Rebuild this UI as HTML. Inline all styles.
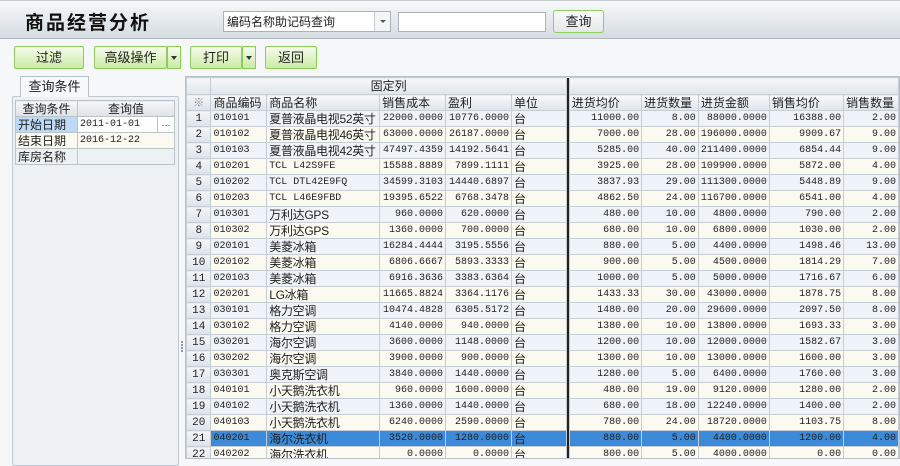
<!DOCTYPE html>
<html><head><meta charset="utf-8"><style>
*{margin:0;padding:0;box-sizing:border-box}
body{width:900px;height:459px;overflow:hidden;background:#f5f7f9;font-family:"Liberation Sans","Noto Sans CJK SC",sans-serif;font-size:12px;color:#222;position:relative}
.top{position:absolute;left:0;top:0;width:900px;height:39px;background:linear-gradient(#f7f8f9,#d4dce1);border-top:1px solid #c8ccd0;border-bottom:1px solid #b0b8bf}
.title{position:absolute;left:25px;top:7px;font-size:19px;font-weight:bold;letter-spacing:2px;color:#111}
.combo{position:absolute;left:223px;top:10px;width:168px;height:21px;background:#fff;border:1px solid #a9b2ba;font-size:12px;padding:1px 3px}
.combo .ar{position:absolute;right:0;top:0;width:16px;height:19px;border-left:1px solid #ccc;background:#f4f5f6}
.combo .ar:after{content:"";position:absolute;left:5px;top:8px;border:3px solid transparent;border-top:3px solid #555}
.inp{position:absolute;left:398px;top:11px;width:148px;height:20px;background:#fff;border:1px solid #a9b2ba}
.btn{position:absolute;height:23px;border:1px solid #8ccd57;border-radius:2px;background:linear-gradient(#f6fbec,#cbeba5);text-align:center;line-height:21px;font-size:13px;color:#222}
.qb{background:linear-gradient(#fafafa,#e4e8ea);border:1px solid #8fd060;border-radius:3px}
.dd{position:absolute;height:23px;width:14px;border:1px solid #8ccd57;background:linear-gradient(#f6fbec,#cbeba5)}
.dd:after{content:"";position:absolute;left:3px;top:9px;border:3px solid transparent;border-top:4px solid #333}
.tab{position:absolute;left:20px;top:76px;width:69px;height:21px;background:#f7f8f9;border:1px solid #b8c0c6;border-bottom:none;text-align:center;line-height:20px;font-size:13px}
.panel{position:absolute;left:12px;top:96px;width:167px;height:370px;background:#eef1f4;border:1px solid #c2c9ce;border-radius:2px}
.lt{position:absolute;left:15px;top:100px;width:159px;border-collapse:collapse;table-layout:fixed;font-size:12px}
.lt td{border:1px solid #bcc4ca;height:16px;padding:0 2px;white-space:nowrap;overflow:hidden;line-height:14px}
.lt .h td{background:linear-gradient(#f6f7f8,#dde3e7);text-align:center}
.dots{position:absolute;left:181px;top:341px;width:2px;height:12px;background:repeating-linear-gradient(#8a9aa8 0 2px,transparent 2px 3px)}
.grid{position:absolute;left:185px;top:76px;width:715px;height:383px;background:#fff;border:1px solid #b8c0c6;overflow:hidden}
.gt{border-collapse:collapse;table-layout:fixed;font-family:"Liberation Mono","Noto Sans CJK SC",monospace;font-size:10px}
.gt td{border:1px solid #c6cdd3;height:16px;padding:0 2px;white-space:nowrap;overflow:hidden;line-height:14px}
.gt .hd td{background:linear-gradient(#f7f8f9,#dfe5e9);font-family:"Liberation Sans","Noto Sans CJK SC",sans-serif;font-size:12px;text-align:left}
.gt td.n{text-align:center;font-size:11px}
.gt td.r{text-align:right}
.gt td.c{font-family:"Liberation Sans","Noto Sans CJK SC",sans-serif;font-size:12px;letter-spacing:-0.3px}
.gt tr.o td{background:#eff3f8}
.gt tr.e td{background:#fbfaf0}
.gt tr.s td{background:#3d8bd8}
.gt tr td.n{background:linear-gradient(#f4f6f8,#dce3e8)}
.gt tr td.sep{background:#222;border:none;padding:0}
</style></head><body>
<div class="top">
<div class="title">商品经营分析</div>
<div class="combo">编码名称助记码查询<div class="ar"></div></div>
<div class="inp"></div>
<div class="btn qb" style="left:553px;top:9px;width:51px;height:23px">查询</div>
</div>
<div class="btn" style="left:14px;top:46px;width:70px">过滤</div>
<div class="btn" style="left:94px;top:46px;width:73px">高级操作</div>
<div class="dd" style="left:167px;top:46px"></div>
<div class="btn" style="left:190px;top:46px;width:52px">打印</div>
<div class="dd" style="left:242px;top:46px"></div>
<div class="btn" style="left:265px;top:46px;width:52px">返回</div>
<div class="panel"></div>
<div class="tab">查询条件</div>
<table class="lt">
<colgroup><col style="width:62px"><col style="width:80px"><col style="width:17px"></colgroup>
<tr class="h"><td>查询条件</td><td colspan="2">查询值</td></tr>
<tr><td style="background:#bcd9f6">开始日期</td><td style="background:#fff;font-family:'Liberation Mono',monospace;font-size:10px">2011-01-01</td><td style="background:#fff;font-size:9px;text-align:center;padding:0">···</td></tr>
<tr><td style="background:#fbfaf0">结束日期</td><td colspan="2" style="background:#fbfaf0;font-family:'Liberation Mono',monospace;font-size:10px">2016-12-22</td></tr>
<tr><td style="background:#eef1f4">库房名称</td><td colspan="2" style="background:#eef1f4"></td></tr>
</table>
<div class="dots"></div>
<div class="grid">
<table class="gt">
<colgroup><col style="width:25px"><col style="width:56px"><col style="width:113px"><col style="width:66px"><col style="width:66px"><col style="width:57px"><col style="width:3px"><col style="width:74px"><col style="width:57px"><col style="width:64px"><col style="width:76px"><col style="width:55px"></colgroup>
<tr class="hd" style="height:17px"><td class="n" style="background:linear-gradient(#f7f8f9,#dfe5e9)"></td><td colspan="5" style="text-align:center">固定列</td><td class="sep"></td><td colspan="5"></td></tr>
<tr class="hd"><td class="n" style="color:#888">※</td><td>商品编码</td><td>商品名称</td><td>销售成本</td><td>盈利</td><td>单位</td><td class="sep"></td><td>进货均价</td><td>进货数量</td><td>进货金额</td><td>销售均价</td><td>销售数量</td></tr>
<tr class="o"><td class="n">1</td><td>010101</td><td class="c">夏普液晶电视52英寸</td><td class="r">22000.0000</td><td class="r">10776.0000</td><td class="c">台</td><td class="sep"></td><td class="r">11000.00</td><td class="r">8.00</td><td class="r">88000.0000</td><td class="r">16388.00</td><td class="r">2.00</td></tr>
<tr class="e"><td class="n">2</td><td>010102</td><td class="c">夏普液晶电视46英寸</td><td class="r">63000.0000</td><td class="r">26187.0000</td><td class="c">台</td><td class="sep"></td><td class="r">7000.00</td><td class="r">28.00</td><td class="r">196000.0000</td><td class="r">9909.67</td><td class="r">9.00</td></tr>
<tr class="o"><td class="n">3</td><td>010103</td><td class="c">夏普液晶电视42英寸</td><td class="r">47497.4359</td><td class="r">14192.5641</td><td class="c">台</td><td class="sep"></td><td class="r">5285.00</td><td class="r">40.00</td><td class="r">211400.0000</td><td class="r">6854.44</td><td class="r">9.00</td></tr>
<tr class="e"><td class="n">4</td><td>010201</td><td>TCL L42S9FE</td><td class="r">15588.8889</td><td class="r">7899.1111</td><td class="c">台</td><td class="sep"></td><td class="r">3925.00</td><td class="r">28.00</td><td class="r">109900.0000</td><td class="r">5872.00</td><td class="r">4.00</td></tr>
<tr class="o"><td class="n">5</td><td>010202</td><td>TCL DTL42E9FQ</td><td class="r">34599.3103</td><td class="r">14440.6897</td><td class="c">台</td><td class="sep"></td><td class="r">3837.93</td><td class="r">29.00</td><td class="r">111300.0000</td><td class="r">5448.89</td><td class="r">9.00</td></tr>
<tr class="e"><td class="n">6</td><td>010203</td><td>TCL L46E9FBD</td><td class="r">19395.6522</td><td class="r">6768.3478</td><td class="c">台</td><td class="sep"></td><td class="r">4862.50</td><td class="r">24.00</td><td class="r">116700.0000</td><td class="r">6541.00</td><td class="r">4.00</td></tr>
<tr class="o"><td class="n">7</td><td>010301</td><td class="c">万利达GPS</td><td class="r">960.0000</td><td class="r">620.0000</td><td class="c">台</td><td class="sep"></td><td class="r">480.00</td><td class="r">10.00</td><td class="r">4800.0000</td><td class="r">790.00</td><td class="r">2.00</td></tr>
<tr class="e"><td class="n">8</td><td>010302</td><td class="c">万利达GPS</td><td class="r">1360.0000</td><td class="r">700.0000</td><td class="c">台</td><td class="sep"></td><td class="r">680.00</td><td class="r">10.00</td><td class="r">6800.0000</td><td class="r">1030.00</td><td class="r">2.00</td></tr>
<tr class="o"><td class="n">9</td><td>020101</td><td class="c">美菱冰箱</td><td class="r">16284.4444</td><td class="r">3195.5556</td><td class="c">台</td><td class="sep"></td><td class="r">880.00</td><td class="r">5.00</td><td class="r">4400.0000</td><td class="r">1498.46</td><td class="r">13.00</td></tr>
<tr class="e"><td class="n">10</td><td>020102</td><td class="c">美菱冰箱</td><td class="r">6806.6667</td><td class="r">5893.3333</td><td class="c">台</td><td class="sep"></td><td class="r">900.00</td><td class="r">5.00</td><td class="r">4500.0000</td><td class="r">1814.29</td><td class="r">7.00</td></tr>
<tr class="o"><td class="n">11</td><td>020103</td><td class="c">美菱冰箱</td><td class="r">6916.3636</td><td class="r">3383.6364</td><td class="c">台</td><td class="sep"></td><td class="r">1000.00</td><td class="r">5.00</td><td class="r">5000.0000</td><td class="r">1716.67</td><td class="r">6.00</td></tr>
<tr class="e"><td class="n">12</td><td>020201</td><td class="c">LG冰箱</td><td class="r">11665.8824</td><td class="r">3364.1176</td><td class="c">台</td><td class="sep"></td><td class="r">1433.33</td><td class="r">30.00</td><td class="r">43000.0000</td><td class="r">1878.75</td><td class="r">8.00</td></tr>
<tr class="o"><td class="n">13</td><td>030101</td><td class="c">格力空调</td><td class="r">10474.4828</td><td class="r">6305.5172</td><td class="c">台</td><td class="sep"></td><td class="r">1480.00</td><td class="r">20.00</td><td class="r">29600.0000</td><td class="r">2097.50</td><td class="r">8.00</td></tr>
<tr class="e"><td class="n">14</td><td>030102</td><td class="c">格力空调</td><td class="r">4140.0000</td><td class="r">940.0000</td><td class="c">台</td><td class="sep"></td><td class="r">1380.00</td><td class="r">10.00</td><td class="r">13800.0000</td><td class="r">1693.33</td><td class="r">3.00</td></tr>
<tr class="o"><td class="n">15</td><td>030201</td><td class="c">海尔空调</td><td class="r">3600.0000</td><td class="r">1148.0000</td><td class="c">台</td><td class="sep"></td><td class="r">1200.00</td><td class="r">10.00</td><td class="r">12000.0000</td><td class="r">1582.67</td><td class="r">3.00</td></tr>
<tr class="e"><td class="n">16</td><td>030202</td><td class="c">海尔空调</td><td class="r">3900.0000</td><td class="r">900.0000</td><td class="c">台</td><td class="sep"></td><td class="r">1300.00</td><td class="r">10.00</td><td class="r">13000.0000</td><td class="r">1600.00</td><td class="r">3.00</td></tr>
<tr class="o"><td class="n">17</td><td>030301</td><td class="c">奥克斯空调</td><td class="r">3840.0000</td><td class="r">1440.0000</td><td class="c">台</td><td class="sep"></td><td class="r">1280.00</td><td class="r">5.00</td><td class="r">6400.0000</td><td class="r">1760.00</td><td class="r">3.00</td></tr>
<tr class="e"><td class="n">18</td><td>040101</td><td class="c">小天鹅洗衣机</td><td class="r">960.0000</td><td class="r">1600.0000</td><td class="c">台</td><td class="sep"></td><td class="r">480.00</td><td class="r">19.00</td><td class="r">9120.0000</td><td class="r">1280.00</td><td class="r">2.00</td></tr>
<tr class="o"><td class="n">19</td><td>040102</td><td class="c">小天鹅洗衣机</td><td class="r">1360.0000</td><td class="r">1440.0000</td><td class="c">台</td><td class="sep"></td><td class="r">680.00</td><td class="r">18.00</td><td class="r">12240.0000</td><td class="r">1400.00</td><td class="r">2.00</td></tr>
<tr class="e"><td class="n">20</td><td>040103</td><td class="c">小天鹅洗衣机</td><td class="r">6240.0000</td><td class="r">2590.0000</td><td class="c">台</td><td class="sep"></td><td class="r">780.00</td><td class="r">24.00</td><td class="r">18720.0000</td><td class="r">1103.75</td><td class="r">8.00</td></tr>
<tr class="s"><td class="n">21</td><td>040201</td><td class="c">海尔洗衣机</td><td class="r">3520.0000</td><td class="r">1280.0000</td><td class="c">台</td><td class="sep"></td><td class="r">880.00</td><td class="r">5.00</td><td class="r">4400.0000</td><td class="r">1200.00</td><td class="r">4.00</td></tr>
<tr class="e"><td class="n">22</td><td>040202</td><td class="c">海尔洗衣机</td><td class="r">0.0000</td><td class="r">0.0000</td><td class="c">台</td><td class="sep"></td><td class="r">800.00</td><td class="r">5.00</td><td class="r">4000.0000</td><td class="r">0.00</td><td class="r">0.00</td></tr>
</table>
</div>
</body></html>
